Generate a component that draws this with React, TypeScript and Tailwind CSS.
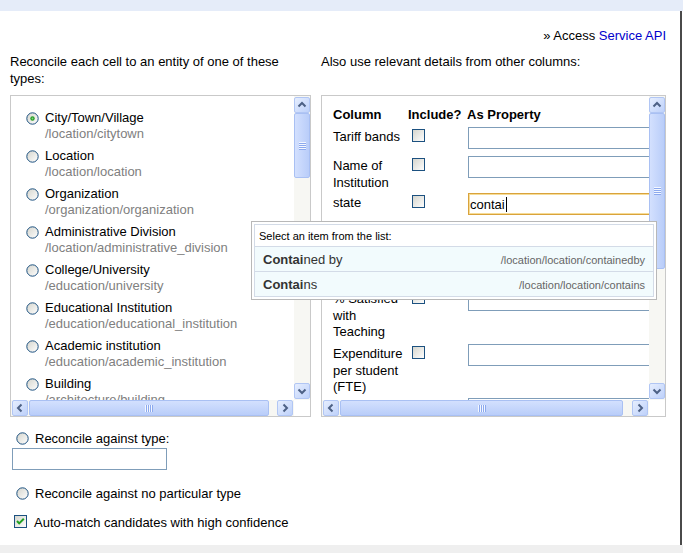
import { useId } from "react";

const types: [string, string][] = [
  ["City/Town/Village", "/location/citytown"],
  ["Location", "/location/location"],
  ["Organization", "/organization/organization"],
  ["Administrative Division", "/location/administrative_division"],
  ["College/University", "/education/university"],
  ["Educational Institution", "/education/educational_institution"],
  ["Academic institution", "/education/academic_institution"],
  ["Building", "/architecture/building"],
];

const columns: { label: string; h: string; value?: string }[] = [
  { label: "Tariff bands", h: "h-[29px]" },
  { label: "Name of Institution", h: "h-[37px]" },
  { label: "state", h: "h-[29px]", value: "contai" },
  { label: "Average Entry Tariff", h: "h-[67px]" },
  { label: "% Satisfied with Teaching", h: "h-[55px]" },
  { label: "Expenditure per student (FTE)", h: "h-[54px]" },
  { label: "Student: Staff Ratio", h: "h-[54px]" },
];

export default function App() {
  return (
    <div className="relative flex h-[553px] w-[683px] flex-col bg-white font-['Liberation_Sans',Arial,sans-serif] text-[13px] leading-[16px] text-black">
      <div className="h-[11px] shrink-0 bg-[#e5ecf9]" />
      <main className="h-[534px] w-[682px] shrink-0 border-r-2 border-[#4a4a4a] pl-[10px] pr-[14px]">
        <div className="pt-[17px] text-right">
          » Access <span className="text-[#0000cc]">Service API</span>
        </div>

        <div className="mt-[9px] flex gap-[10px] leading-[17px]">
          <p className="w-[301px]">Reconcile each cell to an entity of one of these types:</p>
          <p className="w-[345px]">Also use relevant details from other columns:</p>
        </div>

        <div className="mt-[8px] flex gap-[10px]">
          <Box width="w-[301px]" thumbV={65} thumbH={240}>
            <div className="pl-[15px] pt-[14px]">
              {types.map(([name, path], i) => (
                <div key={path} className="mb-[6px] flex gap-[6px]">
                  <div className="mt-[2px]">
                    <Radio checked={i === 0} />
                  </div>
                  <div className="whitespace-nowrap">
                    <div>{name}</div>
                    <div className="text-[#808080]">{path}</div>
                  </div>
                </div>
              ))}
            </div>
          </Box>

          <Box width="w-[345px]" thumbV={156} thumbH={283}>
            <div className="pl-[11px] pt-[11px]">
              <div className="flex whitespace-nowrap font-bold">
                <div className="w-[75px] shrink-0">Column</div>
                <div className="w-[59px] shrink-0">Include?</div>
                <div>As Property</div>
              </div>
              <div className="mt-[4px]">
                {columns.map((c) => (
                  <div key={c.label} className={`flex items-start ${c.h}`}>
                    <div className="w-[75px] shrink-0 pt-[2px] leading-[16.5px]">{c.label}</div>
                    <div className="w-[59px] shrink-0 pl-[4px] pt-[2px]">
                      <Checkbox />
                    </div>
                    {c.value ? (
                      <div className="ml-[1px] flex h-[22px] w-[200px] shrink-0 items-center border border-[#d9a33c] px-[1px] pt-[1px] shadow-[inset_0_0_0_1px_#f6dc97]">
                        {c.value}
                        <span className="ml-[1px] inline-block h-[15px] w-[1px] bg-black" />
                      </div>
                    ) : (
                      <div className="ml-[1px] h-[22px] w-[200px] shrink-0 border border-[#7f9db9]" />
                    )}
                  </div>
                ))}
              </div>
            </div>
          </Box>
        </div>

        <div className="mt-[14px] flex items-start gap-[6px] pl-[6px]">
          <div className="mt-[1px]">
            <Radio />
          </div>
          <span>Reconcile against type:</span>
        </div>
        <div className="ml-[2px] mt-[1px] h-[22px] w-[155px] border border-[#7f9db9]" />

        <div className="mt-[16px] flex items-start gap-[6px] pl-[6px]">
          <div className="mt-[1px]">
            <Radio />
          </div>
          <span>Reconcile against no particular type</span>
        </div>

        <div className="mt-[13px] flex items-start gap-[7px] pl-[4px]">
          <div>
            <Checkbox checked />
          </div>
          <span>Auto-match candidates with high confidence</span>
        </div>
      </main>
      <div className="h-[8px] shrink-0 bg-[#efefef]" />

      {/* autocomplete dropdown over the property field */}
      <div className="absolute left-[251px] top-[221px] w-[406px] border border-[#b8b8b8] bg-white p-[2px]">
        <div className="border border-[#d3dbe7]">
          <div className="h-[21px] pl-[4px] text-[11px] leading-[22px]">Select an item from the list:</div>
          <Suggestion match="Contai" rest="ned by" path="/location/location/containedby" />
          <Suggestion match="Contai" rest="ns" path="/location/location/contains" />
        </div>
      </div>
    </div>
  );
}

function Suggestion({ match, rest, path }: { match: string; rest: string; path: string }) {
  return (
    <div className="flex h-[25px] items-center justify-between border-t border-[#d3dbe7] bg-[#f2fbfd] px-[8px] pt-[1px]">
      <span className="text-[#333]">
        <b>{match}</b>
        {rest}
      </span>
      <span className="text-[11px] text-[#666]">{path}</span>
    </div>
  );
}

function Box({
  width,
  thumbV,
  thumbH,
  children,
}: {
  width: string;
  thumbV: number;
  thumbH: number;
  children: React.ReactNode;
}) {
  return (
    <div className={`grid h-[322px] shrink-0 grid-cols-[1fr_16px] grid-rows-[304px_16px] border border-[#c9c9c9] ${width}`}>
      <div className="overflow-hidden">{children}</div>
      <div className="flex flex-col bg-[#f7f7f3] py-[1px]">
        <ScrollButton dir="up" />
        <div
          className="flex shrink-0 items-center justify-center rounded-[2px] border border-[#a9c0f3] bg-gradient-to-r from-[#d3e0fe] to-[#b9cdf9]"
          style={{ height: thumbV }}
        >
          <Grip vertical />
        </div>
        <div className="flex-1" />
        <ScrollButton dir="down" />
      </div>
      <div className="flex bg-[#f7f7f3] px-[1px]">
        <ScrollButton dir="left" />
        <div
          className="ml-[1px] flex shrink-0 items-center justify-center rounded-[2px] border border-[#a9c0f3] bg-gradient-to-b from-[#d3e0fe] to-[#b9cdf9]"
          style={{ width: thumbH }}
        >
          <Grip />
        </div>
        <div className="flex-1" />
        <ScrollButton dir="right" />
      </div>
      <div className="bg-white" />
    </div>
  );
}

function Grip({ vertical }: { vertical?: boolean }) {
  const bars = [0, 1, 2, 3];
  if (vertical) {
    return (
      <div className="flex flex-col">
        {bars.map((b) => (
          <div key={b} className="h-[2px] w-[7px] border-b border-t border-b-[#8ca9ee] border-t-[#f3f7ff]" />
        ))}
      </div>
    );
  }
  return (
    <div className="flex">
      {bars.map((b) => (
        <div key={b} className="h-[7px] w-[2px] border-l border-r border-l-[#f3f7ff] border-r-[#8ca9ee]" />
      ))}
    </div>
  );
}

function ScrollButton({ dir }: { dir: "up" | "down" | "left" | "right" }) {
  const pts = {
    up: "3.5,8.5 7,5 10.5,8.5",
    down: "3.5,5.5 7,9 10.5,5.5",
    left: "8.5,3.5 5,7 8.5,10.5",
    right: "5.5,3.5 9,7 5.5,10.5",
  }[dir];
  return (
    <div className="h-[16px] w-[16px] shrink-0 rounded-[2px] border border-[#b1c6f4] bg-gradient-to-br from-[#e6eefe] to-[#bed1fa]">
      <svg width="14" height="14" viewBox="0 0 14 14">
        <polyline points={pts} fill="none" stroke="#4d6185" strokeWidth="2" />
      </svg>
    </div>
  );
}

function Radio({ checked }: { checked?: boolean }) {
  const id = useId();
  return (
    <svg width="13" height="13" viewBox="0 0 13 13" className="block">
      <defs>
        <linearGradient id={id} x1="0" y1="0" x2="1" y2="1">
          <stop offset="0" stopColor="#d4d4cc" />
          <stop offset="1" stopColor="#ffffff" />
        </linearGradient>
      </defs>
      <circle cx="6.5" cy="6.5" r="5.7" fill={`url(#${id})`} stroke="#1c5180" strokeWidth="1" />
      {checked && (
        <>
          <circle cx="6.5" cy="6.5" r="2.2" fill="#2a9d2a" />
          <circle cx="6.5" cy="6.5" r="0.9" fill="#7ed67e" />
        </>
      )}
    </svg>
  );
}

function Checkbox({ checked }: { checked?: boolean }) {
  const id = useId();
  return (
    <svg width="13" height="13" viewBox="0 0 13 13" className="block">
      <defs>
        <linearGradient id={id} x1="0" y1="0" x2="1" y2="1">
          <stop offset="0" stopColor="#d4d4cc" />
          <stop offset="1" stopColor="#ffffff" />
        </linearGradient>
      </defs>
      <rect x="0.5" y="0.5" width="12" height="12" fill={`url(#${id})`} stroke="#1c5180" />
      {checked && <polyline points="3,6 5.2,8.4 9.8,3.8" fill="none" stroke="#21a121" strokeWidth="2" />}
    </svg>
  );
}
